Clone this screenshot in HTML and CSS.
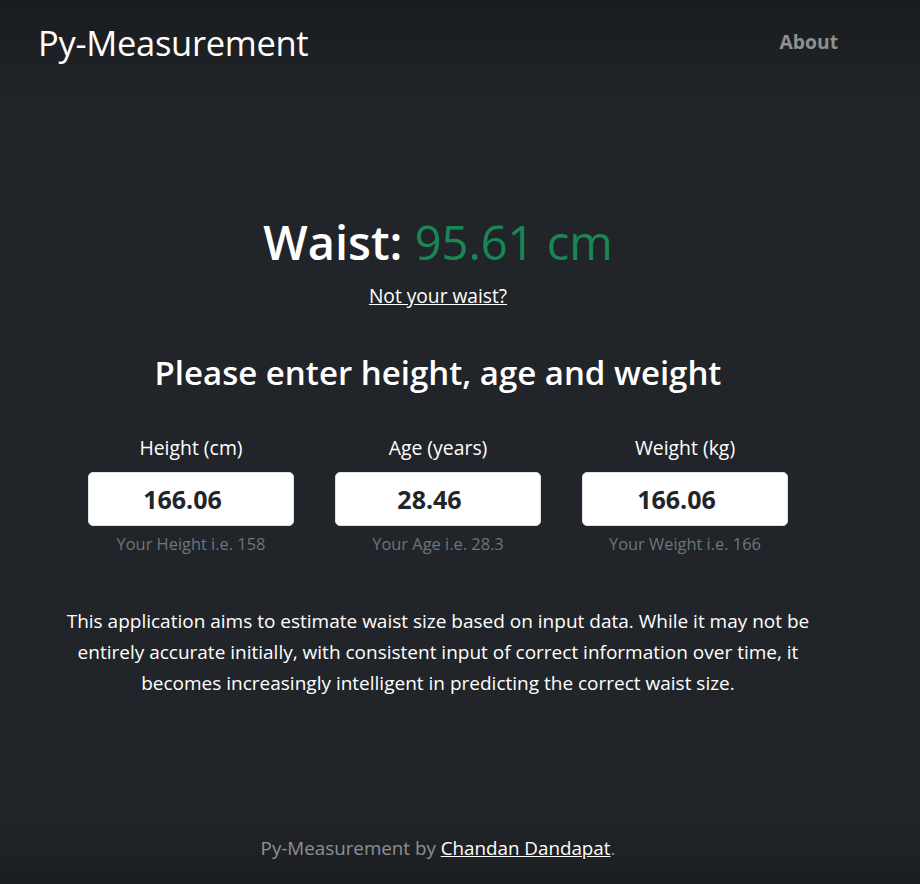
FILE: index.html
```html
<!DOCTYPE html>
<html lang="en">
<head>
<meta charset="utf-8">
<title>Py-Measurement</title>
<link rel="stylesheet" href="styles.css">
</head>
<body>
<div class="page">
  <header class="masthead">
    <h1 class="brand">Py-Measurement</h1>
    <nav class="nav"><a class="nav-link" href="#">About</a></nav>
  </header>

  <main class="content">
    <h1 class="result">Waist: <span class="value">95.61 cm</span></h1>
    <a class="again" href="#">Not your waist?</a>

    <h2 class="prompt">Please enter height, age and weight</h2>

    <form class="fields">
      <div class="field">
        <label class="label" for="h">Height (cm)</label>
        <input class="input" id="h" type="text" value="166.06">
        <small class="help">Your Height i.e. 158</small>
      </div>
      <div class="field">
        <label class="label" for="a">Age (years)</label>
        <input class="input" id="a" type="text" value="28.46">
        <small class="help">Your Age i.e. 28.3</small>
      </div>
      <div class="field">
        <label class="label" for="w">Weight (kg)</label>
        <input class="input" id="w" type="text" value="166.06">
        <small class="help">Your Weight i.e. 166</small>
      </div>
    </form>

    <p class="about">This application aims to estimate waist size based on input data. While it may not be<br>entirely accurate initially, with consistent input of correct information over time, it<br>becomes increasingly intelligent in predicting the correct waist size.</p>
  </main>

  <footer class="footer">
    <p>Py-Measurement by <a href="#">Chandan Dandapat</a>.</p>
  </footer>
</div>
</body>
</html>
```

FILE: styles.css
```css
html, body {
  margin: 0;
  height: 100%;
}

body {
  background: linear-gradient(to bottom, #191c1f 0px, #212529 110px, #212529 calc(100% - 70px), #1b1e21 100%);
  color: #fff;
  font-family: "Open Sans", "Noto Sans", sans-serif;
}

.page {
  width: 800px;
  margin-left: 38px;
  min-height: 100vh;
  display: flex;
  flex-direction: column;
  box-sizing: border-box;
}

.masthead {
  display: flex;
  justify-content: space-between;
  align-items: center;
  padding-top: 23px;
}

.brand {
  margin: 0;
  font-size: 34.5px;
  font-weight: 500;
  line-height: 40px;
  letter-spacing: -0.3px;
}

.nav-link {
  color: rgba(255, 255, 255, 0.5);
  font-weight: 700;
  font-size: 19.3px;
  text-decoration: none;
  margin-top: -4px;
  display: block;
}

.content {
  display: flex;
  flex-direction: column;
  align-items: center;
  text-align: center;
}

.result {
  margin: 152px 0 0;
  font-size: 47px;
  line-height: 55px;
  font-weight: 600;
}

.value {
  color: #198754;
  font-weight: 500;
}

.again {
  margin-top: 12px;
  color: #fff;
  font-size: 19.2px;
  line-height: 27px;
}

.prompt {
  margin: 46px 0 0;
  font-size: 33px;
  line-height: 35px;
  font-weight: 600;
}

.fields {
  margin-top: 44px;
  display: flex;
  gap: 41px;
}

.field {
  width: 206px;
  display: flex;
  flex-direction: column;
  align-items: center;
}

.label {
  font-size: 19.4px;
  line-height: 27px;
}

.input {
  margin-top: 11px;
  width: 100%;
  height: 54px;
  box-sizing: border-box;
  border: 1px solid #dee2e6;
  border-radius: 5px;
  background: #fff;
  color: #212529;
  font-family: inherit;
  font-size: 25px;
  font-weight: 700;
  text-align: center;
  padding: 0 20px 0 3px;
}

.help {
  margin-top: 6px;
  font-size: 16.4px;
  line-height: 24px;
  color: #6c757d;
}

.about {
  margin: 50px 0 0;
  font-size: 19px;
  line-height: 31px;
}

.footer {
  margin-top: auto;
  padding-bottom: 22px;
  text-align: center;
  color: rgba(255, 255, 255, 0.5);
  font-size: 18.8px;
  line-height: 27px;
}

.footer p {
  margin: 0;
}

.footer a {
  color: #fff;
}
```
